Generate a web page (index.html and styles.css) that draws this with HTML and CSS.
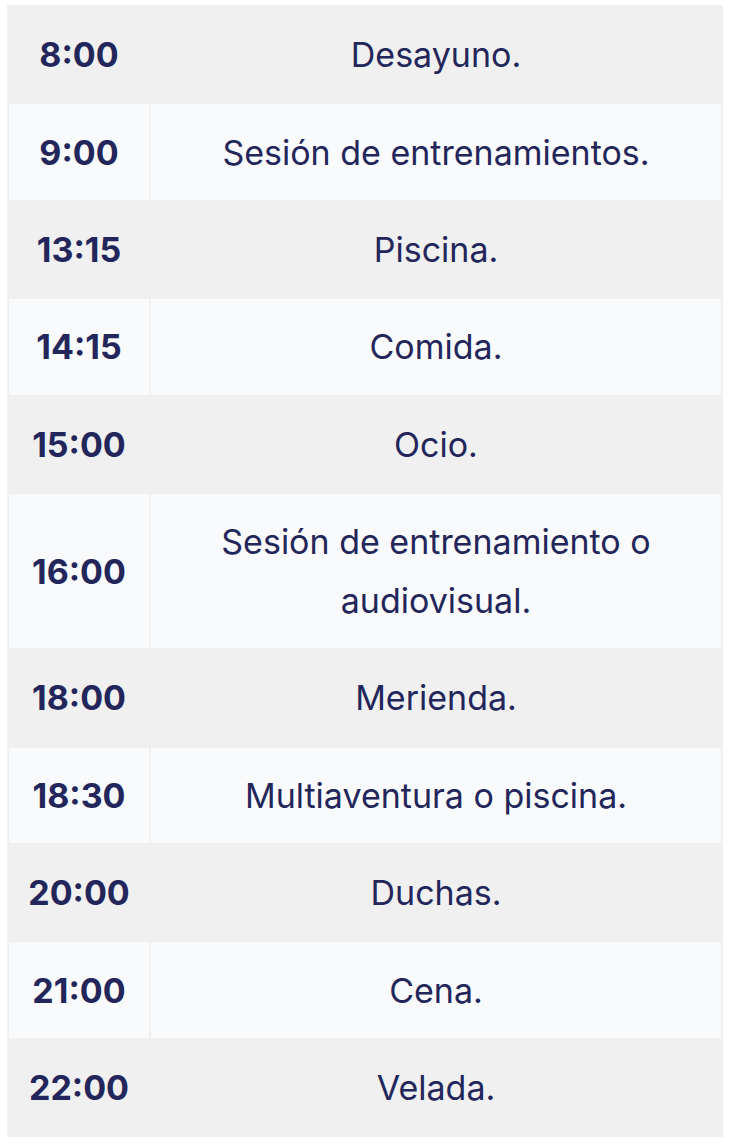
FILE: index.html
```html
<!DOCTYPE html>
<html lang="es">
<head>
<meta charset="utf-8">
<title>Horario</title>
<link rel="stylesheet" href="styles.css">
</head>
<body>
<table class="schedule">
  <tbody>
    <tr><td class="time">8:00</td><td class="act">Desayuno.</td></tr>
    <tr><td class="time">9:00</td><td class="act">Sesión de entrenamientos.</td></tr>
    <tr><td class="time">13:15</td><td class="act">Piscina.</td></tr>
    <tr><td class="time">14:15</td><td class="act">Comida.</td></tr>
    <tr><td class="time">15:00</td><td class="act">Ocio.</td></tr>
    <tr><td class="time">16:00</td><td class="act">Sesión de entrenamiento o audiovisual.</td></tr>
    <tr><td class="time">18:00</td><td class="act">Merienda.</td></tr>
    <tr><td class="time">18:30</td><td class="act">Multiaventura o piscina.</td></tr>
    <tr><td class="time">20:00</td><td class="act">Duchas.</td></tr>
    <tr><td class="time">21:00</td><td class="act">Cena.</td></tr>
    <tr><td class="time">22:00</td><td class="act">Velada.</td></tr>
  </tbody>
</table>
</body>
</html>
```
FILE: styles.css
```css
html, body {
  background: #ffffff;
}
body {
  margin: 5px 7px 0 7px;
  font-family: Inter, "Noto Sans", "Liberation Sans", sans-serif;
  color: #23265a;
}
.schedule {
  width: 716px;
  border-collapse: collapse;
}
.schedule td {
  border: 2px solid #f0f0f0;
  padding: 18.2px 8px;
  font-size: 34px;
  line-height: 59px;
  text-align: center;
  vertical-align: middle;
}
.schedule tr:nth-child(odd) td {
  background: #f0f0f0;
}
.schedule tr:nth-child(even) td {
  background: #f9fafc;
}
.time {
  width: 124px;
  font-weight: 700;
}
.act {
  font-weight: 400;
  padding-left: 60px;
  padding-right: 60px;
}
```
